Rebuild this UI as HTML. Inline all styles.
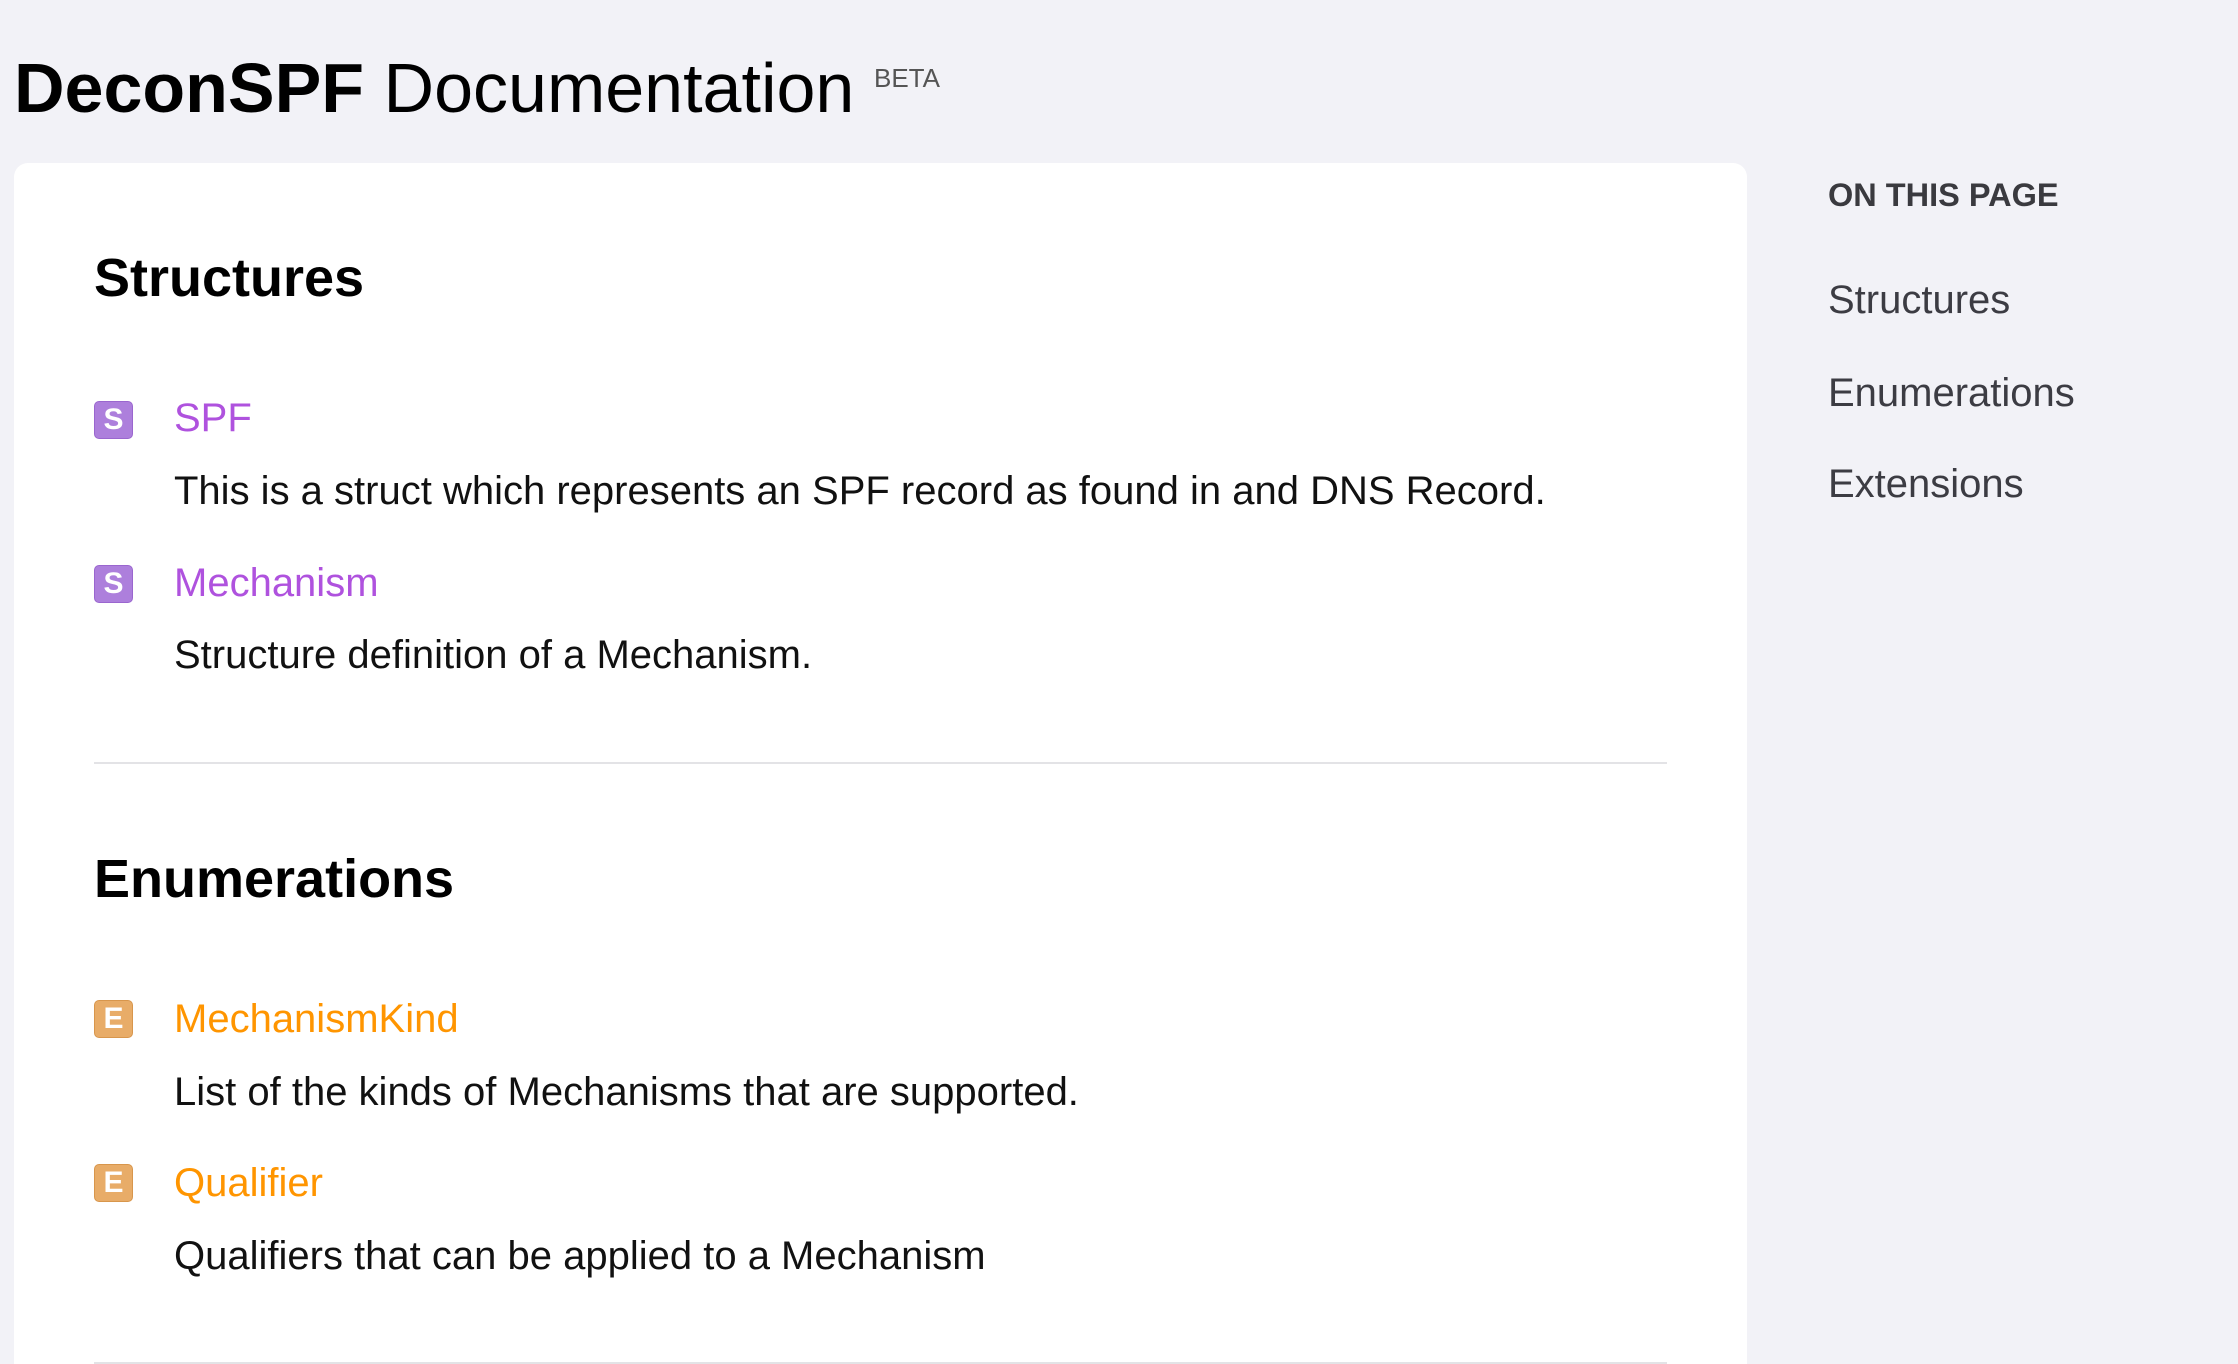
<!DOCTYPE html>
<html><head><meta charset="utf-8"><style>
*{margin:0;padding:0;box-sizing:border-box}
html,body{width:2238px;height:1364px;overflow:hidden;background:#f2f2f7;font-family:"Liberation Sans",sans-serif}
.a{position:absolute;white-space:nowrap;line-height:1}
.card{position:absolute;left:14px;top:163px;width:1733px;height:1201px;background:#fff;border-radius:14px 14px 0 0}
.ic{position:absolute;width:39px;height:38px;border-radius:5px;color:#fff;font-weight:bold;font-size:30px;text-align:center;line-height:36px}
.s{background:#ad7fdc;border:1.5px solid #9a66cf}
.e{background:#e8ac68;border:1.5px solid #d8964c}
.lk{font-size:40px}
.p{color:#af52de}.o{color:#ff9500}
.d{font-size:40px;color:#111;letter-spacing:0}
.h{font-size:54px;font-weight:bold;color:#000}
.hr{position:absolute;left:94px;width:1573px;height:2px;background:#e3e3e6}
.nav{font-size:40px;color:#3c3c43}
</style></head><body>
<div class="a" style="left:14px;top:53px;font-size:70px;color:#000"><b>DeconSPF</b> Documentation</div>
<div class="a" style="left:874px;top:65px;font-size:26px;color:#555">BETA</div>
<div class="card"></div>
<div class="a h" style="left:94px;top:251px">Structures</div>
<div class="ic s" style="left:94px;top:401px">S</div>
<div class="a lk p" style="left:174px;top:398px">SPF</div>
<div class="a d" style="left:174px;top:471px">This is a struct which represents an SPF record as found in and DNS Record.</div>
<div class="ic s" style="left:94px;top:565px">S</div>
<div class="a lk p" style="left:174px;top:563px">Mechanism</div>
<div class="a d" style="left:174px;top:635px">Structure definition of a Mechanism.</div>
<div class="hr" style="top:762px"></div>
<div class="a h" style="left:94px;top:852px">Enumerations</div>
<div class="ic e" style="left:94px;top:1000px">E</div>
<div class="a lk o" style="left:174px;top:999px">MechanismKind</div>
<div class="a d" style="left:174px;top:1072px">List of the kinds of Mechanisms that are supported.</div>
<div class="ic e" style="left:94px;top:1164px">E</div>
<div class="a lk o" style="left:174px;top:1163px">Qualifier</div>
<div class="a d" style="left:174px;top:1236px">Qualifiers that can be applied to a Mechanism</div>
<div class="hr" style="top:1362px"></div>
<div class="a" style="left:1828px;top:179px;font-size:32.5px;font-weight:bold;color:#3a3a3f">ON THIS PAGE</div>
<div class="a nav" style="left:1828px;top:280px">Structures</div>
<div class="a nav" style="left:1828px;top:373px">Enumerations</div>
<div class="a nav" style="left:1828px;top:464px">Extensions</div>
</body></html>
